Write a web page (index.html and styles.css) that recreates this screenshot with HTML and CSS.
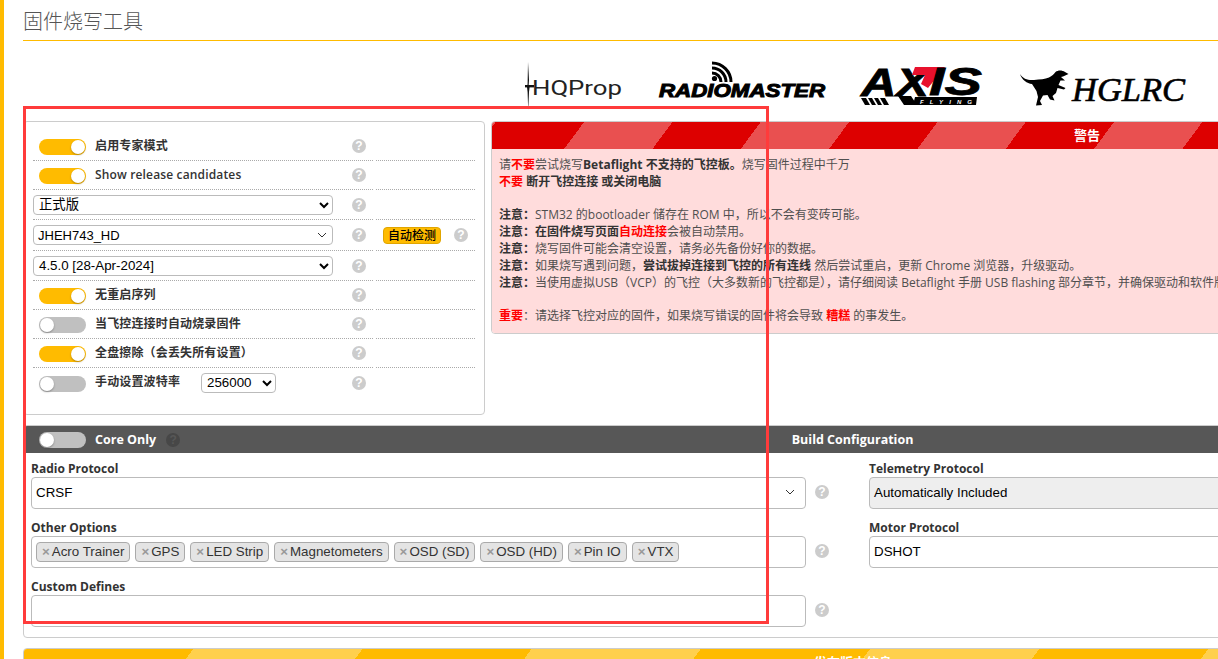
FILE: index.html
```html
<!DOCTYPE html>
<html lang="zh-CN">
<head>
<meta charset="utf-8">
<title>固件烧写工具</title>
<link rel="stylesheet" href="styles.css">
</head>
<body>
<div class="app">
  <div class="strip"></div>
  <main class="main">
    <h1 class="title">固件烧写工具</h1>

    <div class="logos">
      <svg class="logo logo-hq" viewBox="0 0 100 50" aria-label="HQProp">
        <path class="prop" d="M4 2 L5 20 L4.6 26 L5.6 27 L5 32 L4.2 50 L3.6 32 L3 27 L3.6 24 Z"/>
        <rect class="prop" x="1" y="25" width="9" height="2.4"/>
        <text class="hq-text" x="8" y="35" textLength="90" lengthAdjust="spacingAndGlyphs">HQProp</text>
      </svg>
      <svg class="logo logo-rm" viewBox="0 0 170 50" aria-label="RadioMaster">
        <circle cx="57.5" cy="18.5" r="2.6"/>
        <path class="wifi" d="M55 13 A9 9 0 0 1 64 22 M55 8 A14 14 0 0 1 69 22 M55 3 A19 19 0 0 1 74 22"/>
        <text class="rm-text" x="2" y="37.4" textLength="166" lengthAdjust="spacingAndGlyphs">RADIOMASTER</text>
      </svg>
      <svg class="logo logo-axis" viewBox="0 0 124 50" aria-label="AXIS Flying">
        <text class="ax-text" x="1" y="36" textLength="68" lengthAdjust="spacingAndGlyphs">AX</text>
        <polygon class="ax-red" points="55,7 85,7 68,28 61,24 65,15 52,15"/>
        <polygon points="38,36 51,36 57,45 44,45"/>
        <text class="ax-text" x="69" y="35" textLength="53" lengthAdjust="spacingAndGlyphs">IS</text>
        <polygon points="1,38 6,38 10,45 5,45"/>
        <polygon points="8,38 12,38 16,45 12,45"/>
        <polygon points="14,38 18,38 22,45 18,45"/>
        <polygon points="20,38 25,38 29,45 24,45"/>
        <polygon points="55,37 117,37 116,45 53,45"/>
        <text class="ax-fly" x="60" y="43.6" textLength="52" lengthAdjust="spacing">FLYING</text>
      </svg>
      <svg class="logo logo-hg" viewBox="0 0 170 50" aria-label="HGLRC">
        <path d="M2 14 C5 19 10 20.5 16 20 C22 19.5 27 19 31 17.5 C34 16 36 14 37.5 12 C40 10 44 10 47 12 L50.5 14 L45 16.5 L43 17 L47 20.5 L42.5 20.5 L40.5 25 L47.5 28 L46 29.5 L39.5 28 L38 33 L34.5 36 L36.5 40.5 L32 39.5 L29.5 35 L25 35.5 L22 41 L24 45 L18 45.5 L20 37 L18.5 31 L14 24 C9 23.5 4 20 2 14 Z"/>
        <text class="hg-text" x="54" y="41" textLength="113" lengthAdjust="spacingAndGlyphs">HGLRC</text>
      </svg>
    </div>

    <div class="top-row">
      <section class="panel options">
        <div class="row r29">
          <div class="cell"><div class="opt"><span class="toggle on"></span><span class="opt-label">启用专家模式</span></div><span class="help">?</span></div>
          <div class="cell side"></div>
        </div>
        <div class="row r29">
          <div class="cell"><div class="opt"><span class="toggle on"></span><span class="opt-label">Show release candidates</span></div><span class="help">?</span></div>
          <div class="cell side"></div>
        </div>
        <div class="row r30">
          <div class="cell"><select class="native wide"><option>正式版</option></select><span class="help">?</span></div>
          <div class="cell side"></div>
        </div>
        <div class="row r31">
          <div class="cell"><div class="fake wide"><span>JHEH743_HD</span><svg class="chev" viewBox="0 0 10 6"><path d="M1 1 L5 5 L9 1"/></svg></div><span class="help">?</span></div>
          <div class="cell side"><button class="detect">自动检测</button><span class="help">?</span></div>
        </div>
        <div class="row r30">
          <div class="cell"><select class="native wide"><option>4.5.0 [28-Apr-2024]</option></select><span class="help">?</span></div>
          <div class="cell side"></div>
        </div>
        <div class="row r29">
          <div class="cell"><div class="opt"><span class="toggle on"></span><span class="opt-label">无重启序列</span></div><span class="help">?</span></div>
          <div class="cell side"></div>
        </div>
        <div class="row r29">
          <div class="cell"><div class="opt"><span class="toggle"></span><span class="opt-label">当飞控连接时自动烧录固件</span></div><span class="help">?</span></div>
          <div class="cell side"></div>
        </div>
        <div class="row r29">
          <div class="cell"><div class="opt"><span class="toggle on"></span><span class="opt-label">全盘擦除（会丢失所有设置）</span></div><span class="help">?</span></div>
          <div class="cell side"></div>
        </div>
        <div class="row r29 last">
          <div class="cell"><div class="opt"><span class="toggle"></span><span class="opt-label baud-label">手动设置波特率</span><select class="native baud"><option>256000</option></select></div><span class="help">?</span></div>
          <div class="cell side"></div>
        </div>
      </section>

      <section class="panel warning">
        <div class="warn-head"><span>警告</span></div>
        <div class="warn-body">
          <p>请<b class="red">不要</b>尝试烧写<b>Betaflight</b> <b>不支持的飞控板。</b>烧写固件过程中千万</p>
          <p><b class="red">不要</b> <b>断开飞控连接 或关闭电脑</b></p>
          <p>&nbsp;</p>
          <p><b>注意：</b>STM32 的bootloader 储存在 ROM 中，所以不会有变砖可能。</p>
          <p><b>注意：</b><b>在固件烧写页面</b><b class="red">自动连接</b>会被自动禁用。</p>
          <p><b>注意：</b>烧写固件可能会清空设置，请务必先备份好你的数据。</p>
          <p><b>注意：</b>如果烧写遇到问题，<b>尝试拔掉连接到飞控的所有连线</b> 然后尝试重启，更新 Chrome 浏览器，升级驱动。</p>
          <p><b>注意：</b>当使用虚拟USB（VCP）的飞控（大多数新的飞控都是），请仔细阅读 Betaflight 手册 USB flashing 部分章节，并确保驱动和软件版本正确。</p>
          <p>&nbsp;</p>
          <p><b class="red">重要</b>：请选择飞控对应的固件，如果烧写错误的固件将会导致 <b class="red">糟糕</b> 的事发生。</p>
        </div>
      </section>
    </div>

    <section class="panel build">
      <div class="build-head">
        <div class="build-core"><span class="toggle"></span><span class="core-label">Core Only</span><span class="help dark">?</span></div>
        <span class="build-title">Build Configuration</span>
      </div>
      <div class="build-grid">
        <div class="col-left">
          <div class="field">
            <label class="field-label">Radio Protocol</label>
            <div class="field-line">
              <div class="control"><span>CRSF</span><svg class="chev" viewBox="0 0 10 6"><path d="M1 1 L5 5 L9 1"/></svg></div>
              <span class="help">?</span>
            </div>
          </div>
          <div class="field">
            <label class="field-label">Other Options</label>
            <div class="field-line">
              <div class="control chips">
                <span class="chip"><i>×</i>Acro Trainer</span>
                <span class="chip"><i>×</i>GPS</span>
                <span class="chip"><i>×</i>LED Strip</span>
                <span class="chip"><i>×</i>Magnetometers</span>
                <span class="chip"><i>×</i>OSD (SD)</span>
                <span class="chip"><i>×</i>OSD (HD)</span>
                <span class="chip"><i>×</i>Pin IO</span>
                <span class="chip"><i>×</i>VTX</span>
              </div>
              <span class="help">?</span>
            </div>
          </div>
          <div class="field">
            <label class="field-label">Custom Defines</label>
            <div class="field-line">
              <div class="control"></div>
              <span class="help">?</span>
            </div>
          </div>
        </div>
        <div class="col-right">
          <div class="field">
            <label class="field-label">Telemetry Protocol</label>
            <div class="control disabled"><span>Automatically Included</span></div>
          </div>
          <div class="field">
            <label class="field-label">Motor Protocol</label>
            <div class="control"><span>DSHOT</span></div>
          </div>
        </div>
      </div>
    </section>

    <section class="panel release">
      <div class="release-head"><span>发布版本信息</span></div>
    </section>
  </main>
</div>
<div class="annotation"></div>
</body>
</html>
```

FILE: styles.css
```css
* { box-sizing: border-box; }
html, body { margin: 0; height: 659px; overflow: hidden; background: #fff; }
body { font: 12px/1.4 "Open Sans", "Noto Sans CJK SC", sans-serif; color: #333; }

.app { display: flex; width: 1683px; }
.strip { width: 4px; flex: none; height: 659px; background: #ffbb00; }
.main { flex: 1; padding-left: 19px; min-width: 0; }

.title {
  margin: 0; height: 41px; border-bottom: 1px solid #ffbb00;
  font-size: 20px; font-weight: 300; line-height: 43px; color: #555;
}

/* logos */
.logos { display: flex; height: 80px; padding: 19px 0 0 501px; gap: 33px; }
.logo { height: 50px; flex: none; display: block; fill: #000; overflow: visible; }
.logo-hq { width: 100px; }
.logo-rm { width: 170px; }
.logo-axis { width: 124px; }
.logo-hg { width: 170px; margin-left: 1px; }
.prop { fill: #111; }
.hq-text { font: 400 21px Roboto, sans-serif; fill: #222; }
.wifi { fill: none; stroke: #000; stroke-width: 3; }
.rm-text { font: italic 700 18.5px "Liberation Sans", sans-serif; stroke: #000; stroke-width: 1; }
.ax-text { font: italic 700 39px "Liberation Sans", sans-serif; stroke: #000; stroke-width: .8; }
.ax-red { fill: #e8112d; }
.ax-fly { font: italic 700 6px "Liberation Sans", sans-serif; fill: #fff; }
.hg-text { font: italic 400 34px "Liberation Serif", serif; stroke: #000; stroke-width: .6; }

/* panels */
.panel { border: 1px solid #ccc; border-radius: 4px; background: #fff; }
.top-row { display: flex; align-items: flex-start; gap: 6px; }

.options { width: 462px; height: 294px; flex: none; padding: 10px 9px 0; }
.row { display: grid; grid-template-columns: 340px 99px; column-gap: 3px; }
.r29 { height: 29px; }
.r30 { height: 30px; }
.r31 { height: 31px; }
.cell { display: flex; align-items: center; border-bottom: 1px dotted #aaa; }
.last .cell { border-bottom: 0; }
.opt { display: flex; align-items: center; width: 300px; padding-left: 6px; }
.opt .toggle { margin-top: 2px; }
.opt-label { font-weight: 600; margin-left: 9px; white-space: nowrap; letter-spacing: .15px; }
.baud-label { width: 106px; }
.cell > .help { margin-left: 19px; }
.cell.side { padding-left: 7px; }
.cell.side > .help { margin-left: 13px; }

.toggle {
  position: relative; display: block; flex: none; width: 47px; height: 16px;
  border-radius: 8px; background: #c0c0c0;
}
.toggle::after {
  content: ""; position: absolute; left: 1px; top: 1px; width: 14px; height: 14px;
  border-radius: 50%; background: #fff; box-shadow: 0 1px 2px rgba(0,0,0,.3);
}
.toggle.on { background: #ffbb00; }
.toggle.on::after { left: 32px; }

.help {
  display: block; flex: none; width: 14px; height: 14px; border-radius: 50%;
  background: #ccc; color: #fff; font: 700 12px/14px "Liberation Sans", sans-serif;
  text-align: center;
}
.help.dark { background: #474747; color: #575757; }

.native {
  height: 20px; padding: 0; text-indent: 1px; border: 1px solid #bbb; border-radius: 4px; background-color: #fff;
  font: 13.33px "Liberation Sans", "Noto Sans CJK SC", sans-serif; color: #000;
}
.wide { width: 300px; }
.baud { width: 75px; }
.fake {
  display: flex; align-items: center; justify-content: space-between; height: 20px;
  padding: 0 5px 0 4px; border: 1px solid #bbb; border-radius: 4px;
  font: 13px "Liberation Sans", sans-serif; color: #000;
}
.chev { width: 10px; height: 6px; fill: none; stroke: #333; stroke-width: 1; flex: none; }
.detect {
  display: block; width: 58px; height: 17px; padding: 0; border: 1px solid #e0a500; border-radius: 4px;
  background: #ffbb00; color: #000; font: 500 12px/14px "Noto Sans CJK SC", sans-serif;
}

/* warning */
.warning { width: 1192px; flex: none; height: 213px; overflow: hidden; }
.warn-head {
  height: 27px; text-align: center; color: #fff; font-weight: 700; font-size: 13px; line-height: 27px;
  background: repeating-linear-gradient(126.5deg,
    #e95050 0 3px, #dd0000 3px 74px, #e95050 74px 142px);
}
.warn-body { padding: 8px 7px 9px; color: #4f4f4f; background: #ffdcdc; height: 186px; }
.warn-body p { margin: 0; white-space: nowrap; line-height: 16.8px; }
.warn-body b { font-weight: 700; color: #333; }
.warn-body b.red { color: #f00; }

/* build */
.build { margin-top: 10px; height: 213px; overflow: hidden; }
.build-head {
  display: flex; align-items: center; position: relative; height: 27px;
  background: #575757; color: #fff; font-weight: 700; font-size: 12.5px;
}
.build-core { display: flex; align-items: center; padding-left: 15px; }
.core-label { margin-left: 9px; }
.build-core .help { margin-left: 10px; }
.build-title { flex: 1; text-align: center; margin-left: -157px; }

.build-grid { display: flex; padding: 7px 7px 0; gap: 0; }
.col-left { width: 838px; flex: none; }
.col-right { flex: 1; padding-right: 7px; }
.field { margin-bottom: 10px; }
.field-label { display: block; font-weight: 700; line-height: 17px; height: 17px; }
.field-line { display: flex; align-items: center; width: 798px; }
.field-line .help { margin: 0 0 2px 9px; }
.control {
  display: flex; align-items: center; justify-content: space-between; flex: 1; height: 32px;
  padding: 0 10px 2px 4px; border: 1px solid #bbb; border-radius: 4px;
  font: 13.33px "Liberation Sans", sans-serif; color: #000;
}
.disabled { background: #eee; }
.chips { justify-content: flex-start; gap: 5px; padding-bottom: 0; }
.chip {
  display: block; height: 20px; padding: 0 5px; border: 1px solid #aaa; border-radius: 4px;
  background: #e4e4e4; color: #333; line-height: 18px; white-space: nowrap;
}
.chip i { font-style: normal; font-weight: 700; color: #999; margin-right: 2px; }

/* release */
.release { margin-top: 10px; overflow: hidden; }
.release-head {
  height: 27px; text-align: center; color: #fff; font-weight: 700; line-height: 27px; font-size: 13px;
  background: repeating-linear-gradient(126.5deg, #ffbb00 0 136px, #ffd04d 136px 272px);
}

/* review annotation drawn over the screenshot */
.annotation {
  position: absolute; left: 23px; top: 106px; width: 746px; height: 518px;
  border: 3px solid #ff3b3b; pointer-events: none;
}
```
